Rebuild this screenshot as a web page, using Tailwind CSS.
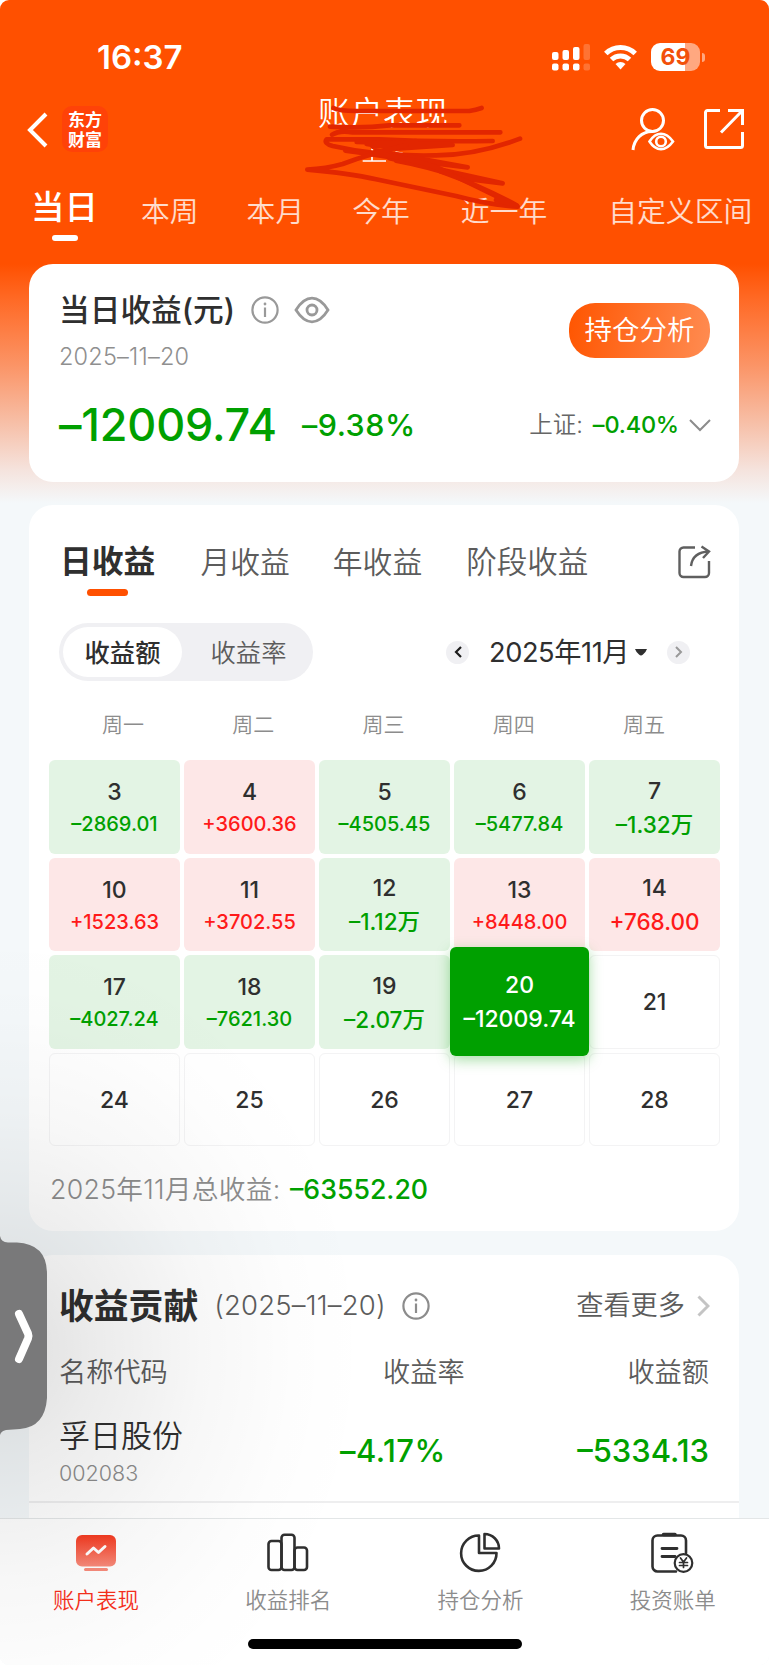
<!DOCTYPE html>
<html lang="zh-CN">
<head>
  <meta charset="UTF-8" />
  <meta name="viewport" content="width=device-width, initial-scale=1.0" />
  <script src="https://cdn.jsdelivr.net/npm/@tailwindcss/browser@4"></script>
  <title>账户表现</title>
</head>
<body class="bg-white font-['Inter','Noto_Sans_CJK_SC',sans-serif] text-[#2f2f2f]">

<div class="relative w-[769px] h-[1665px] overflow-hidden rounded-[9px] bg-[#f4f8fa] whitespace-nowrap">
  <div class="h-full flex flex-col bg-[linear-gradient(180deg,#ff5000_0px,#ff5000_264px,#ff6a26_300px,#fb9466_365px,#f7bda4_420px,#f5e3dd_470px,#f4f8fa_503px)]">

    <!-- 状态栏 -->
    <div class="h-[90px] shrink-0 flex items-start justify-between pl-[97px] pr-[64px] text-white">
      <div class="mt-[36px] text-[33px] leading-[42px] font-semibold">16:37</div>
      <div class="mt-[43px] flex items-start">
        <svg class="w-[38px] h-[28px]" viewBox="0 0 38 28" fill="#fff">
          <rect x="0" y="9" width="6.500" height="8" rx="2"/><rect x="10.500" y="7" width="6.500" height="10" rx="2"/><rect x="21" y="4" width="6.500" height="13" rx="2"/><rect x="31.500" y="1" width="6.500" height="16" rx="2" opacity=".2"/>
          <rect x="0" y="20.500" width="6.500" height="7" rx="2"/><rect x="10.500" y="20.500" width="6.500" height="7" rx="2"/><rect x="21" y="20.500" width="6.500" height="7" rx="2"/><rect x="31.500" y="20.500" width="6.500" height="7" rx="2" opacity=".2"/>
        </svg>
        <svg class="ml-[14px] w-[33px] h-[28px]" viewBox="0 0 33 28" fill="none" stroke="#fff" stroke-width="5">
          <path d="M1.800 10.500A21 21 0 0 1 31.200 10.500"/>
          <path d="M7.500 16.500A13 13 0 0 1 25.500 16.500"/>
          <path d="M11.500 21a7.500 7.500 0 0 1 10 0L16.500 26.500z" fill="#fff" stroke="none"/>
        </svg>
        <div class="ml-[14px] w-[49px] h-[28px] rounded-[9px] bg-[linear-gradient(90deg,#fff_69%,#ffa880_69%)] text-center text-[23px] leading-[29px] font-bold text-[#f2500a]">69</div>
        <div class="ml-[2px] mt-[10px] w-[3px] h-[9px] rounded-r-full bg-white/50"></div>
      </div>
    </div>

    <!-- 导航栏 -->
    <div class="h-[90px] shrink-0 flex items-start text-white">
      <svg class="ml-[27px] mt-[22px] w-[22px] h-[36px]" viewBox="0 0 22 36" fill="none" stroke="#fff" stroke-width="4"><path d="M19 2L3 18L19 34"/></svg>
      <div class="ml-[13px] mt-[16px] w-[46px] h-[46px] rounded-[10px] bg-[#ff4208] pt-[5px] text-center text-[17px] leading-[19.500px] font-bold">东方<br>财富</div>
      <div class="ml-[210px] mt-[3px] w-[131px] text-[32.500px] leading-[42px] font-[350]">账户表现</div>
      <svg class="ml-[182px] mt-[17px] w-[44px] h-[44px]" viewBox="0 0 44 44" fill="none" stroke="#fff" stroke-width="3">
        <circle cx="21.500" cy="13.500" r="11"/>
        <path d="M2 43C3 32 11 24.500 21 24.500"/>
        <path d="M18.500 34.500C22 29 26 26.800 30 26.800S38 29 42 34.500C38 40 34 42.200 30 42.200S22 40 18.500 34.500z" stroke-width="2.600"/>
        <circle cx="30" cy="34.500" r="4.800" stroke-width="2.600"/>
      </svg>
      <svg class="ml-[29px] mt-[19px] w-[40px] h-[40px]" viewBox="0 0 40 40" fill="none" stroke="#fff" stroke-width="3">
        <path d="M16 1.500H3.500a2 2 0 0 0-2 2V36.500a2 2 0 0 0 2 2H36.500a2 2 0 0 0 2-2V23"/>
        <path d="M24 1.500H38.500V16M38 2L17 23.500"/>
      </svg>
    </div>

    <!-- 时间区间 -->
    <div class="h-[84px] shrink-0 flex items-start pl-[31px] text-[28.800px] leading-[40px] font-[350] text-white/80">
      <div class="mt-[6px] flex flex-col items-center text-white text-[33.500px] leading-[42px] font-medium">当日<span class="mt-[7px] w-[26px] h-[6px] rounded-full bg-white"></span></div>
      <div class="mt-[12px] ml-[43px]">本周</div>
      <div class="mt-[12px] ml-[48px]">本月</div>
      <div class="mt-[12px] ml-[48px]">今年</div>
      <div class="mt-[12px] ml-[51px]">近一年</div>
      <div class="mt-[12px] ml-[61px]">自定义区间</div>
    </div>

    <!-- 当日收益 -->
    <div class="ml-[29px] mr-[30px] h-[218px] shrink-0 rounded-[24px] bg-white px-[30px] flex flex-col">
      <div class="flex justify-between pt-[26px]">
        <div>
          <div class="flex items-center h-[40px]">
            <span class="text-[30.700px] leading-[40px] font-medium">当日收益(元)</span>
            <svg class="ml-[16px] w-[28px] h-[28px]" viewBox="0 0 28 28" fill="none" stroke="#999" stroke-width="2.200"><circle cx="14" cy="14" r="12.600"/><path d="M14 11.500V21"/><circle cx="14" cy="8" r=".8" fill="#999" stroke-width="1.200"/></svg>
            <svg class="ml-[15px] w-[36px] h-[28px]" viewBox="0 0 36 28" fill="none" stroke="#999" stroke-width="2.800"><path d="M2 14C7 6 12 2.200 18 2.200S29 6 34 14C29 22 24 25.800 18 25.800S7 22 2 14z"/><circle cx="18" cy="14" r="5"/></svg>
          </div>
          <div class="mt-[10px] text-[23.500px] leading-[34px] font-[350] tracking-[0.200px] text-[#8f8f8f]">2025–11–20</div>
        </div>
        <div class="mt-[13px] mr-[-1px] w-[141px] h-[55px] rounded-[26px] bg-[linear-gradient(100deg,#ff5500,#ff8c52)] text-center text-[27.500px] leading-[54px] font-[350] text-white">持仓分析</div>
      </div>
      <div class="flex items-center h-[60px] mt-[21px]">
        <span class="w-[243px] text-[45px] font-medium tracking-[-0.200px] text-[#00a000]">–12009.74</span>
        <span class="text-[30.500px] font-medium text-[#00a000] tracking-[0.500px]">–9.38%</span>
        <span class="ml-auto text-[23.500px] font-[350] text-[#666]">上证:</span>
        <span class="ml-[10px] text-[23.500px] font-medium text-[#00a000] tracking-[-0.200px]">–0.40%</span>
        <svg class="ml-[10px] mr-[-2px] w-[22px] h-[14px]" viewBox="0 0 22 14" fill="none" stroke="#8c8c8c" stroke-width="2"><path d="M1 2L11 12L21 2"/></svg>
      </div>
    </div>

    <!-- 收益日历 -->
    <div class="ml-[29px] mr-[30px] mt-[23px] h-[726px] shrink-0 rounded-[24px] bg-white flex flex-col">
      <div class="flex items-start pl-[31px] pt-[36px] text-[29.800px] leading-[42px] font-[350] text-[#5c5c5c]">
        <div class="flex flex-col items-center text-[31.800px] font-bold text-[#2f2f2f]">日收益<span class="mt-[6px] w-[41px] h-[7px] rounded-full bg-[#ff5000]"></span></div>
        <div class="ml-[45px]">月收益</div>
        <div class="ml-[43px]">年收益</div>
        <div class="ml-[44px] text-[30.500px]">阶段收益</div>
        <svg class="ml-auto mr-[28px] mt-[4px] w-[33px] h-[34px]" viewBox="0 0 33 34" fill="none" stroke="#5f5f5f" stroke-width="2.400">
          <path d="M17 2.500H5.500a4 4 0 0 0-4 4V28a4 4 0 0 0 4 4H27a4 4 0 0 0 4-4V16"/>
          <path d="M13 21C14 12 20 7 31 6.500M23.500 1.500L31 6.500L25 13"/>
        </svg>
      </div>

      <div class="flex items-center h-[58px] mt-[27px] pl-[30px] pr-[49px]">
        <div class="flex items-center w-[254px] h-[58px] rounded-full bg-[#f0f0f3] px-[4px] text-[25.300px] leading-[51px] text-center font-[350] text-[#5c5c5c]">
          <div class="shrink-0 w-[119px] h-[50px] rounded-full bg-white font-medium text-[#2f2f2f]">收益额</div>
          <div class="shrink-0 w-[133px]">收益率</div>
        </div>
        <div class="ml-auto w-[23px] h-[23px] rounded-full bg-[#f0f0f3] flex items-center justify-center">
          <svg class="w-[8px] h-[12px]" viewBox="0 0 8 12" fill="none" stroke="#1c1c1c" stroke-width="2.200"><path d="M7 1L2 6L7 11"/></svg>
        </div>
        <div class="ml-[20px] mt-[2px] w-[141px] text-[27.200px] tracking-[-0.400px]">2025年11月</div>
        <svg class="ml-[5px] w-[12px] h-[7px]" viewBox="0 0 12 7" fill="#2f2f2f"><path d="M0 0H12Q11 3 8 5.500Q6 7.500 4 5.500Q1 3 0 0z"/></svg>
        <div class="ml-[20px] w-[23px] h-[23px] rounded-full bg-[#f0f0f3] flex items-center justify-center">
          <svg class="w-[8px] h-[12px]" viewBox="0 0 8 12" fill="none" stroke="#999" stroke-width="2"><path d="M1 1L6 6L1 11"/></svg>
        </div>
      </div>

      <div class="grid grid-cols-5 mt-[28px] pl-[29px] pr-[30px] h-[30px] text-center text-[21px] leading-[31px] font-[350] text-[#8c8c8c]">
        <div>周一</div><div>周二</div><div>周三</div><div>周四</div><div>周五</div>
      </div>

      <div id="calendar" class="grid grid-cols-5 gap-x-[4px] gap-y-[4px] mt-[21px] pl-[20px] pr-[19px] text-center"></div>

      <div class="mt-[23px] pl-[21px] flex items-center h-[40px] text-[26.700px]">
        <span class="w-[240px] font-[350] text-[#8c8c8c] tracking-[0.300px]">2025年11月总收益:</span>
        <span class="font-medium text-[#00a000]">–63552.20</span>
      </div>
    </div>

    <!-- 收益贡献 -->
    <div class="ml-[29px] mr-[30px] mt-[24px] h-[263px] shrink-0 rounded-t-[24px] bg-white flex flex-col">
      <div class="flex items-center h-[44px] mt-[29px] px-[30px] text-[#5c5c5c]">
        <span class="text-[34.800px] font-bold text-[#2f2f2f]">收益贡献</span>
        <span class="ml-[16px] w-[172px] text-[27.500px] font-[350] tracking-[0.200px]">(2025–11–20)</span>
        <svg class="ml-[16px] w-[28px] h-[28px]" viewBox="0 0 28 28" fill="none" stroke="#8c8c8c" stroke-width="2.200"><circle cx="14" cy="14" r="12.600"/><path d="M14 11.500V21"/><circle cx="14" cy="8" r=".8" fill="#8c8c8c" stroke-width="1.200"/></svg>
        <span class="ml-auto text-[27.200px] font-[350]">查看更多</span>
        <svg class="ml-[12px] mr-[-1px] w-[13px] h-[22px]" viewBox="0 0 13 22" fill="none" stroke="#c4c4c4" stroke-width="3"><path d="M1.500 1.500L11 11L1.500 20.500"/></svg>
      </div>
      <div class="flex items-center h-[40px] mt-[25px] px-[30px] text-[27.200px] font-[350] text-[#5c5c5c]">
        <span class="w-[324px]">名称代码</span><span>收益率</span><span class="ml-auto">收益额</span>
      </div>
      <div class="flex items-center h-[96px] mt-[10px] px-[30px]">
        <div class="w-[281px]">
          <div class="mt-[-1px] text-[31px] leading-[44px] font-[350]">孚日股份</div>
          <div class="text-[21.500px] leading-[30px] font-[350] text-[#8c8c8c]">002083</div>
        </div>
        <span class="text-[31px] font-medium text-[#00a000] tracking-[0.500px]">–4.17%</span>
        <span class="ml-auto text-[31px] font-medium text-[#00a000]">–5334.13</span>
      </div>
      <div class="mt-auto mb-[15px] h-[2px] bg-[#eeeeef]"></div>
    </div>

    <!-- 底部导航 -->
    <div class="h-[147px] shrink-0 border-t border-[#e3e6e7] bg-white flex flex-col items-center">
      <div class="w-full grid grid-cols-4 text-center text-[21.500px] leading-[30px] font-[350] text-[#8c8c8c]">
        <div class="flex flex-col items-center pt-[12px] text-[#f8301c]">
          <svg class="w-[44px] h-[46px]" viewBox="0 0 44 46">
            <defs><linearGradient id="tab" x1="0" y1="0" x2="0" y2="1"><stop offset="0" stop-color="#f53a20"/><stop offset="1" stop-color="#f88b7b"/></linearGradient></defs>
            <rect x="2" y="4" width="40" height="31.500" rx="6" fill="url(#tab)"/>
            <path d="M13 23L19.500 17L24.500 21.500L31 15.500" fill="none" stroke="#fff" stroke-width="3" stroke-linecap="round" stroke-linejoin="round"/>
            <rect x="10" y="37" width="24" height="3" rx="1.500" fill="#f88b7b"/>
          </svg>
          <div class="mt-[8px]">账户表现</div>
        </div>
        <div class="flex flex-col items-center pt-[12px]">
          <svg class="w-[44px] h-[46px]" viewBox="0 0 44 46" fill="none" stroke="#2f2f2f" stroke-width="2.600">
            <rect x="2.500" y="10" width="13" height="29" rx="3"/><rect x="15.500" y="3.800" width="13" height="35.200" rx="3"/><rect x="28.500" y="16.500" width="12.500" height="22.500" rx="3"/>
          </svg>
          <div class="mt-[8px]">收益排名</div>
        </div>
        <div class="flex flex-col items-center pt-[12px]">
          <svg class="w-[44px] h-[46px]" viewBox="0 0 44 46" fill="none" stroke="#2f2f2f" stroke-width="2.600" stroke-linejoin="round">
            <path d="M20 4.500A17.700 17.700 0 1 0 37.500 22H20z"/>
            <path d="M25.500 3V17.500H40A14.500 14.500 0 0 0 25.500 3z"/>
          </svg>
          <div class="mt-[8px]">持仓分析</div>
        </div>
        <div class="flex flex-col items-center pt-[12px]">
          <svg class="w-[44px] h-[46px]" viewBox="0 0 44 46" fill="none" stroke="#2f2f2f" stroke-width="2.600" stroke-linecap="round">
            <path d="M25 40.500H6.500a5 5 0 0 1-5-5V9.500a5 5 0 0 1 5-5H30a5 5 0 0 1 5 5V22"/>
            <path d="M12.500 3.500H24" stroke-width="3.500"/>
            <path d="M11 17.500H26M11 25.500H24" stroke-width="2.800"/>
            <circle cx="32.500" cy="32" r="8.800" stroke-width="2.200"/>
            <path d="M29.500 27L32.500 31L35.500 27M32.500 31V36.500M28.500 31.500H36.500M28.500 34.500H36.500" stroke-width="1.700"/>
          </svg>
          <div class="mt-[8px]">投资账单</div>
        </div>
      </div>
      <div class="mt-[24px] w-[274px] h-[10px] rounded-full bg-black"></div>
    </div>
  </div>

  <!-- 标题涂抹 -->
  <svg class="absolute left-[296px] top-[90px] w-[240px] h-[125px]" viewBox="0 0 720 375" fill="none" stroke="#e22600" stroke-width="14" stroke-linecap="round" stroke-linejoin="round">
    <path d="M228 174V212M200 213H270M274 173H306M298 186L320 190" stroke="#fff" stroke-width="5" stroke-linecap="butt"/>
    <path d="M112 54Q130 63 180 63H520Q540 60 557 54"/>
    <path d="M102 110Q200 116 280 106H490"/>
    <path d="M613 127H170Q130 120 108 134L150 118"/>
    <path d="M590 153Q400 156 250 148H92Q82 160 110 168Q250 200 420 196Q540 196 672 146"/>
    <path d="M182 156L470 165L300 176L212 162H460M360 153L230 170"/>
    <path d="M148 182Q250 195 330 210L515 232L370 206L240 182"/>
    <path d="M280 205L620 280L500 265Q400 230 300 212"/>
    <path d="M330 166Q220 192 140 222Q90 236 34 239Q160 250 240 268L480 318Q580 345 665 350L430 235Q350 205 230 190"/>
    <path d="M435 245Q560 290 662 346L600 330"/>
  </svg>

  <!-- 侧边阴影与把手 -->
  <div class="absolute inset-0 pointer-events-none bg-[radial-gradient(ellipse_370px_420px_at_0px_1350px,rgba(0,0,0,0.130)_0%,rgba(0,0,0,0.080)_25%,rgba(0,0,0,0.030)_55%,rgba(0,0,0,0.008)_80%,rgba(0,0,0,0)_100%)]"></div>
  <svg class="absolute left-0 top-[1235px] w-[50px] h-[202px]" viewBox="0 0 50 202" fill="none">
    <path d="M0 1Q1 7 8 7.500H17Q47 9 47 39V163Q45 192 20 194L6 195Q1 196 0 200z" fill="#79797a"/>
    <path d="M19 79L28 98.500Q29 101 28 103.500L19 124" stroke="#fff" stroke-width="8" stroke-linecap="round" stroke-linejoin="round"/>
  </svg>
</div>

<script>
  // 日期 + 收益，null 表示未开盘
  const days = [
    [3, "–2869.01"], [4, "+3600.36"], [5, "–4505.45"], [6, "–5477.84"], [7, "–1.32万"],
    [10, "+1523.63"], [11, "+3702.55"], [12, "–1.12万"], [13, "+8448.00"], [14, "+768.00"],
    [17, "–4027.24"], [18, "–7621.30"], [19, "–2.07万"], [20, "–12009.74"], [21, null],
    [24, null], [25, null], [26, null], [27, null], [28, null]
  ];

  document.getElementById("calendar").innerHTML = days.map(([day, profit]) => {
    if (day === 20) {
      return `<div class="relative z-10 -mx-[4px] -mt-[8px] -mb-[7px] rounded-[6px] bg-[#00a000] text-white shadow-[0_4px_14px_rgba(0,160,0,0.350)] pt-[3px] flex flex-col items-center justify-center">
        <div class="text-[23px] leading-[33px] font-medium">${day}</div><div class="text-[23px] leading-[34px] font-medium">${profit}</div></div>`;
    }
    if (!profit) {
      return `<div class="h-[93.600px] rounded-[6px] border border-[#f3f3f4] text-[23px] leading-[93px] font-medium">${day}</div>`;
    }
    const tone = profit[0] === "+" ? "bg-[#fde7e7] text-[#ff1a1a]" : "bg-[#e3f4e4] text-[#00a000]";
    const size = profit.length < 8 ? "text-[22.500px] leading-[34px]" : "text-[20px] leading-[31px]";
    return `<div class="h-[93.600px] rounded-[6px] ${tone} pt-[3px] flex flex-col items-center justify-center">
      <div class="text-[23px] leading-[33px] font-medium text-[#2f2f2f]">${day}</div><div class="${size} font-medium">${profit}</div></div>`;
  }).join("");
</script>
</body>
</html>
